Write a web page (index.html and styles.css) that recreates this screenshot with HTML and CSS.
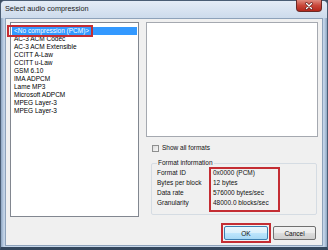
FILE: index.html
```html
<!DOCTYPE html>
<html lang="en">
<head>
<meta charset="UTF-8">
<title>Select audio compression</title>
<link rel="stylesheet" href="styles.css">
</head>
<body>

<div class="window">
  <div class="titlebar">
    <span class="title">Select audio compression</span>
    <span class="close">
      <svg width="26" height="12" viewBox="0 0 26 12">
        <path d="M10.5 3.5 L15.5 8.5 M15.5 3.5 L10.5 8.5" stroke="#5a1a1a" stroke-width="2.6" stroke-linecap="round"/>
        <path d="M10.5 3.5 L15.5 8.5 M15.5 3.5 L10.5 8.5" stroke="#fff" stroke-width="1.4" stroke-linecap="round"/>
      </svg>
    </span>
  </div>

  <div class="client">
    <div class="listbox">
      <div class="item selected"><span class="mark">&lt;No compression (PCM)&gt;</span></div>
      <div class="item">AC-3 ACM Codec</div>
      <div class="item">AC-3 ACM Extensible</div>
      <div class="item">CCITT A-Law</div>
      <div class="item">CCITT u-Law</div>
      <div class="item">GSM 6.10</div>
      <div class="item">IMA ADPCM</div>
      <div class="item">Lame MP3</div>
      <div class="item">Microsoft ADPCM</div>
      <div class="item">MPEG Layer-3</div>
      <div class="item">MPEG Layer-3</div>
    </div>

    <div class="side">
      <div class="preview"></div>

      <label class="check"><span class="box"></span>Show all formats</label>

      <fieldset class="group">
        <legend>Format information</legend>
        <div class="keys">
          <div>Format ID</div>
          <div>Bytes per block</div>
          <div>Data rate</div>
          <div>Granularity</div>
        </div>
        <div class="vals">
          <div>0x0000 (PCM)</div>
          <div>12 bytes</div>
          <div>576000 bytes/sec</div>
          <div>48000.0 blocks/sec</div>
        </div>
      </fieldset>

      <div class="buttons">
        <span class="ok-mark"><button class="btn btn-ok">OK</button></span>
        <button class="btn">Cancel</button>
      </div>
    </div>
  </div>
</div>

</body>
</html>
```

FILE: styles.css
```css
:root{
  --red:#c42d33; --face:#f0f0f0; --frame:#c6d6e8; --sel:#3399ff;
}
html,body{margin:0;padding:0}
body{width:328px;height:250px;overflow:hidden;background:#3d4e62;font-family:"Liberation Sans",Arial,sans-serif;font-size:6.5px;color:#000}

.window{box-sizing:border-box;width:328px;height:250px;display:flex;flex-direction:column;
  background:linear-gradient(90deg,#8fa7c3 0,#c3d4e8 3px,#c9d9eb 50%,#c3d4e8 calc(100% - 3px),#8fa7c3 100%);
  border:1px solid #4a5d74;border-bottom:3px solid #34475d;border-radius:5px 5px 0 0}

.titlebar{height:17px;display:flex;align-items:flex-start;background:linear-gradient(#e4ecf6,#cddbec);border-radius:4px 4px 0 0}
.title{padding:4px 0 0 4px;font-size:7.3px;line-height:8px;color:#1b1b1b}
.close{margin-left:auto;margin-right:5px;width:26px;height:12px;margin-top:-1px;
  background:linear-gradient(#e08c80,#c9473a 50%,#b4271c);border:1px solid #6b2a26;border-top:none;border-radius:0 0 4px 4px;box-sizing:border-box}
.close svg{display:block;margin-left:-1px}

.client{flex:1;margin:0 4px 1px 4px;background:var(--face);border:1px solid #8ea2ba;display:flex;gap:7px;padding:3px 4px 0 4px}

.listbox{box-sizing:border-box;width:129px;height:195px;background:#fff;border:1px solid #828790;padding:4px 1px 0 1px}
.item{line-height:8px;height:8px;padding-left:2px;white-space:nowrap}
.item.selected{background:var(--sel);color:#fff}
.mark{display:inline-block;position:relative}
.mark::after{content:"";position:absolute;left:-7px;right:-4px;top:-2px;bottom:-2px;border:2px solid var(--red)}

.side{width:172px;display:flex;flex-direction:column}
.preview{box-sizing:border-box;height:115px;background:#fff;border:1px solid #a5a9b0}

.check{display:flex;align-items:center;gap:3px;margin:7px 0 0 6px;height:8px;line-height:8px;color:#111}
.box{box-sizing:border-box;width:7px;height:7px;border:1px solid #8e8f8f;background:linear-gradient(135deg,#dcdcdc,#f7f7f7)}

.group{display:flex;margin:7px 1px 0 5px;padding:0 0 2px 5px;border:1px solid #d5dce3;border-radius:2px;min-width:0}
.group legend{padding:0 1px;margin-left:0;line-height:8px;color:#111}
.keys{width:52px;padding-top:1px;line-height:10px;color:#111}
.vals{width:71px;box-sizing:border-box;padding:1px 0 4px 4px;line-height:10px;color:#111;outline:2px solid var(--red);outline-offset:-2px}

.buttons{display:flex;justify-content:flex-end;gap:5px;margin:11px 2px 0 0}
.ok-mark{display:flex;outline:2px solid var(--red);outline-offset:1px}
.btn{box-sizing:border-box;height:14px;width:43px;padding:0;font-family:inherit;font-size:6.5px;color:#111;
  border:1px solid #707070;border-radius:2px;background:linear-gradient(#f2f2f2 0,#ebebeb 50%,#dddddd 50%,#cfcfcf 100%)}
.btn-ok{width:44px;border-color:#3c7fb1;background:linear-gradient(#eaf6fd 0,#d9f0fc 50%,#bee6fd 50%,#a7d9f5 100%)}
```
